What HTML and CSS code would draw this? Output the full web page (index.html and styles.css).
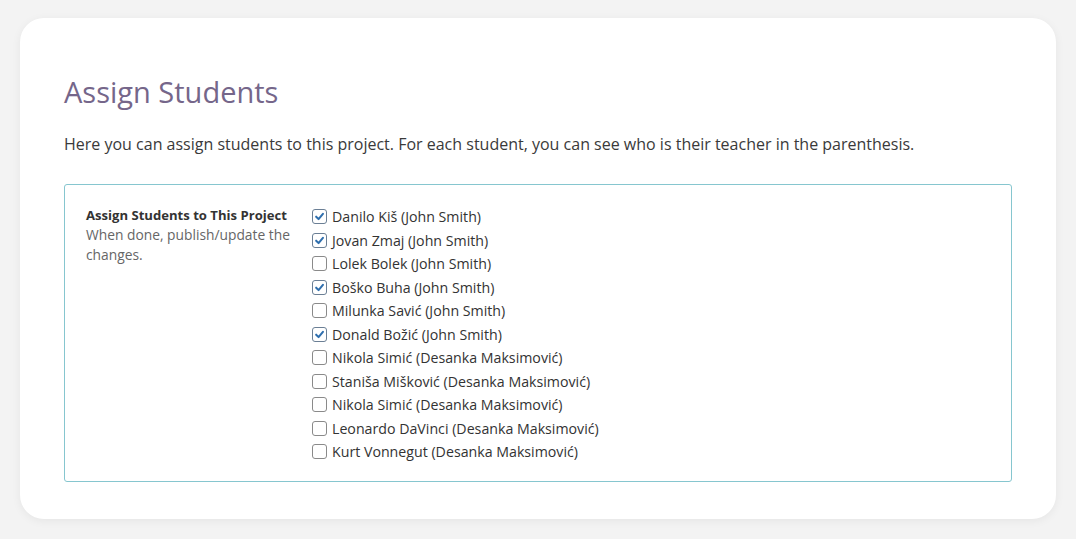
FILE: index.html
```html
<!DOCTYPE html>
<html>
<head>
<meta charset="utf-8">
<link rel="stylesheet" href="styles.css">
</head>
<body>
<div class="card">
  <h1 class="title">Assign Students</h1>
  <p class="intro">Here you can assign students to this project. For each student, you can see who is their teacher in the parenthesis.</p>
  <div class="panel">
    <div class="side">
      <div class="side-label">Assign Students to This Project</div>
      <div class="side-desc">When done, publish/update the changes.</div>
    </div>
    <ul class="list">
      <li><span class="cb on"><svg viewBox="0 0 14 14"><path d="M3.4 7.2 L6 9.8 L10.7 4.1"/></svg></span>Danilo Kiš (John Smith)</li>
      <li><span class="cb on"><svg viewBox="0 0 14 14"><path d="M3.4 7.2 L6 9.8 L10.7 4.1"/></svg></span>Jovan Zmaj (John Smith)</li>
      <li><span class="cb"></span>Lolek Bolek (John Smith)</li>
      <li><span class="cb on"><svg viewBox="0 0 14 14"><path d="M3.4 7.2 L6 9.8 L10.7 4.1"/></svg></span>Boško Buha (John Smith)</li>
      <li><span class="cb"></span>Milunka Savić (John Smith)</li>
      <li><span class="cb on"><svg viewBox="0 0 14 14"><path d="M3.4 7.2 L6 9.8 L10.7 4.1"/></svg></span>Donald Božić (John Smith)</li>
      <li><span class="cb"></span>Nikola Simić (Desanka Maksimović)</li>
      <li><span class="cb"></span>Staniša Mišković (Desanka Maksimović)</li>
      <li><span class="cb"></span>Nikola Simić (Desanka Maksimović)</li>
      <li><span class="cb"></span>Leonardo DaVinci (Desanka Maksimović)</li>
      <li><span class="cb"></span>Kurt Vonnegut (Desanka Maksimović)</li>
    </ul>
  </div>
</div>
</body>
</html>
```
FILE: styles.css
```css
html, body { margin: 0; padding: 0; }
body {
  background: #f3f3f3;
  font-family: "Open Sans", "Liberation Sans", sans-serif;
  color: #333;
  padding: 18px 20px 20px 20px;
}
.card {
  background: #fff;
  border-radius: 24px;
  box-shadow: 0 2px 10px rgba(0,0,0,0.06);
  padding: 58px 44px 36px 44px;
  height: 407px;
}
.title {
  margin: 0;
  font-size: 29px;
  font-weight: 400;
  color: #75668a;
  line-height: 32px;
}
.intro {
  margin: 25px 0 0 0;
  font-size: 16px;
  line-height: 22px;
  color: #3a3a3a;
}
.panel {
  margin-top: 29px;
  border: 1px solid #86c6cf;
  border-radius: 3px;
  display: flex;
  padding: 20px 21px 22px 21px;
  height: 254px;
}
.side {
  width: 226px;
  font-size: 13.8px;
  line-height: 20px;
}
.side-label { font-weight: 700; color: #333; font-size: 13.1px; }
.side-desc { color: #666; }
.list {
  list-style: none;
  margin: 0;
  padding: 0;
  font-size: 14.2px;
  color: #333;
}
.list li {
  display: flex;
  align-items: center;
  height: 23.5px;
}
.cb {
  width: 13px;
  height: 13px;
  border: 1px solid #8a8a8a;
  border-radius: 3px;
  margin-right: 5px;
  display: inline-flex;
  align-items: center;
  justify-content: center;
  box-sizing: content-box;
  background: #fff;
}
.cb.on { border-color: #6b7f95; }
.cb svg { width: 13px; height: 13px; }
.cb svg path { fill: none; stroke: #2f6fae; stroke-width: 2.2; stroke-linecap: round; stroke-linejoin: round; }
```
